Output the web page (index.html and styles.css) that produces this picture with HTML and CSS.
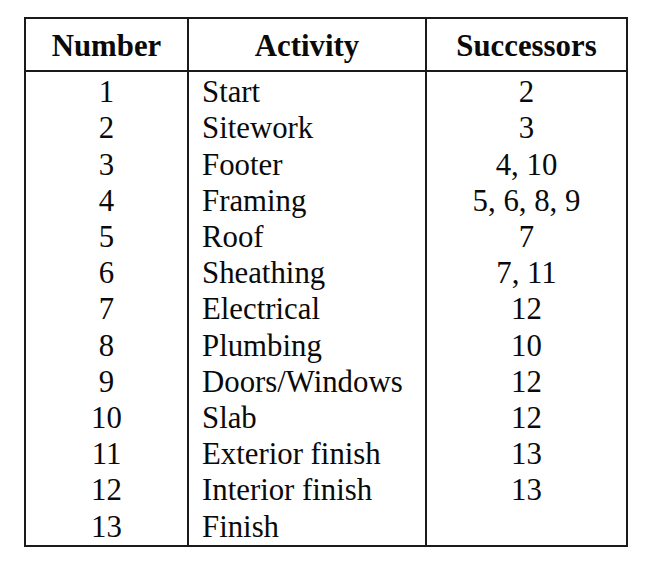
FILE: index.html
```html
<!DOCTYPE html>
<html>
<head>
<meta charset="utf-8">
<link rel="stylesheet" href="styles.css">
</head>
<body>
<table class="act">
  <thead>
    <tr><th class="c-num">Number</th><th class="c-act">Activity</th><th class="c-suc">Successors</th></tr>
  </thead>
  <tbody>
    <tr class="first"><td class="num">1</td><td class="name">Start</td><td class="suc">2</td></tr>
    <tr><td class="num">2</td><td class="name">Sitework</td><td class="suc">3</td></tr>
    <tr><td class="num">3</td><td class="name">Footer</td><td class="suc">4, 10</td></tr>
    <tr><td class="num">4</td><td class="name">Framing</td><td class="suc">5, 6, 8, 9</td></tr>
    <tr><td class="num">5</td><td class="name">Roof</td><td class="suc">7</td></tr>
    <tr><td class="num">6</td><td class="name">Sheathing</td><td class="suc">7, 11</td></tr>
    <tr><td class="num">7</td><td class="name">Electrical</td><td class="suc">12</td></tr>
    <tr><td class="num">8</td><td class="name">Plumbing</td><td class="suc">10</td></tr>
    <tr><td class="num">9</td><td class="name">Doors/Windows</td><td class="suc">12</td></tr>
    <tr><td class="num">10</td><td class="name">Slab</td><td class="suc">12</td></tr>
    <tr><td class="num">11</td><td class="name">Exterior finish</td><td class="suc">13</td></tr>
    <tr><td class="num">12</td><td class="name">Interior finish</td><td class="suc">13</td></tr>
    <tr><td class="num">13</td><td class="name">Finish</td><td class="suc"></td></tr>
  </tbody>
</table>
</body>
</html>
```
FILE: styles.css
```css
html, body {
  margin: 0;
  padding: 0;
  background: #ffffff;
}
body {
  padding: 17px 0 0 24px;
  font-family: "Liberation Serif", "Times New Roman", serif;
  color: #0a0a0a;
}
.act {
  border-collapse: collapse;
  width: 604px;
  table-layout: fixed;
  font-size: 30.8px;
}
.act th, .act td {
  border-left: 2px solid #1a1a1a;
  border-right: 2px solid #1a1a1a;
  padding: 0;
  line-height: 36.2px;
  white-space: nowrap;
}
.act th {
  border-top: 2px solid #1a1a1a;
  border-bottom: 2px solid #1a1a1a;
  font-weight: bold;
  text-align: center;
  padding-top: 9px;
  padding-bottom: 6px;
}
.act tbody tr:last-child td {
  border-bottom: 2px solid #1a1a1a;
}
.act tbody tr.first td {
  padding-top: 2px;
}
.act .c-num { width: 161px; }
.act .c-act { width: 236px; }
.act .c-suc { width: auto; }
.act td.num, .act td.suc { text-align: center; }
.act td.name { text-align: left; padding-left: 13px; }
```
